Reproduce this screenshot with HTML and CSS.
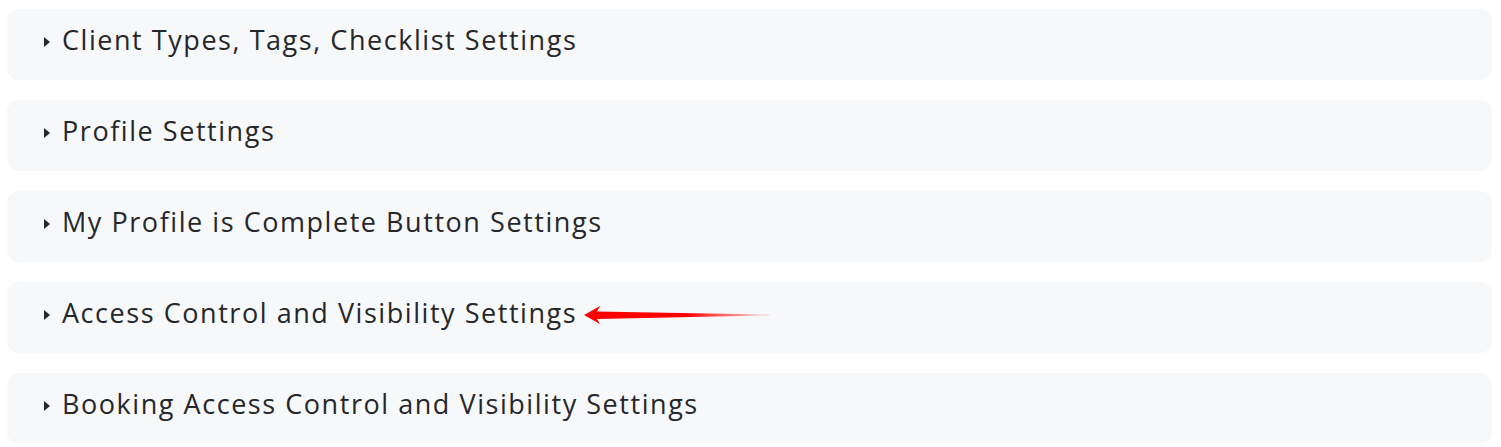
FILE: index.html
```html
<!DOCTYPE html>
<html lang="en">
<head>
<meta charset="utf-8">
<title>Settings</title>
<link rel="stylesheet" href="styles.css">
</head>
<body>
<div class="list">
  <div class="card"><span class="caret"></span><span class="label">Client Types, Tags, Checklist Settings</span></div>
  <div class="card"><span class="caret"></span><span class="label">Profile Settings</span></div>
  <div class="card"><span class="caret"></span><span class="label">My Profile is Complete Button Settings</span></div>
  <div class="card">
    <span class="caret"></span><span class="label">Access Control and Visibility Settings</span>
    <svg class="pointer" width="190" height="22" viewBox="0 0 190 22">
      <defs>
        <linearGradient id="fade" x1="0" y1="0" x2="1" y2="0">
          <stop offset="0" stop-color="#ff0000"/>
          <stop offset="0.55" stop-color="#ff0000"/>
          <stop offset="1" stop-color="#ff0000" stop-opacity="0.1"/>
        </linearGradient>
      </defs>
      <polygon points="0,10 16,1 13,6.5 186,9.5 186,10.5 13,14 16,19" fill="url(#fade)"/>
    </svg>
  </div>
  <div class="card"><span class="caret"></span><span class="label">Booking Access Control and Visibility Settings</span></div>
</div>
</body>
</html>
```
FILE: styles.css
```css
html, body {
  margin: 0;
  padding: 0;
  background: #ffffff;
}
.list {
  display: flex;
  flex-direction: column;
  gap: 20px;
  padding: 9px 9px 0 7px;
}
.card {
  position: relative;
  height: 71px;
  box-sizing: border-box;
  padding: 15px 0 0 37px;
  background: #f7f8fa;
  border-radius: 12px;
  display: flex;
  align-items: flex-start;
  font-family: "Open Sans", "Liberation Sans", sans-serif;
  font-size: 27px;
  font-weight: 400;
  line-height: 32px;
  color: #26272b;
}
.caret {
  width: 0;
  height: 0;
  margin-top: 13px;
  margin-right: 12px;
  border-top: 5px solid transparent;
  border-bottom: 5px solid transparent;
  border-left: 6px solid #26272b;
}
.label {
  white-space: nowrap;
  letter-spacing: 1.55px;
}
.pointer {
  margin-left: 7px;
  margin-top: 8px;
}
```
